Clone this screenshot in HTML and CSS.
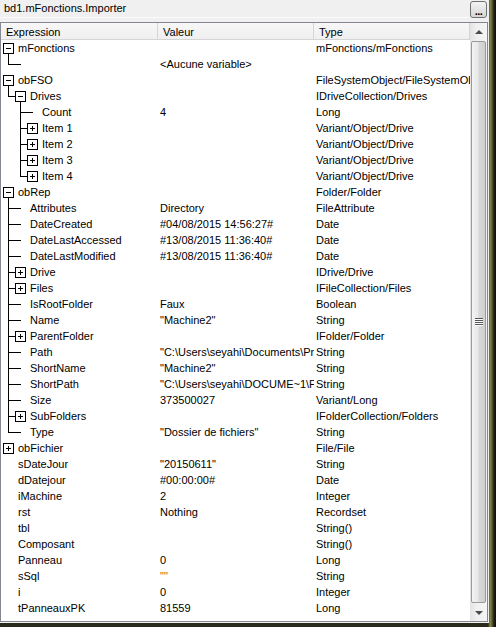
FILE: index.html
```html
<!DOCTYPE html>
<html lang="fr">
<head>
<meta charset="utf-8">
<title>Espions</title>
<link rel="stylesheet" href="styles.css">
</head>
<body>
<div class="window">
  <div class="topbar">
    <div class="field">bd1.mFonctions.Importer</div>
    <div class="btn">...</div>
  </div>
  <div class="listbox">
    <div class="main">
      <div class="hdr">
        <div class="h h1">Expression</div>
        <div class="h h2">Valeur</div>
        <div class="h h3">Type</div>
      </div>
      <div class="rows">
        <div class="r"><div class="c1"><span class="n nm"><i class="bx"></i></span><span>mFonctions</span></div><div class="c2"></div><div class="c3">mFonctions/mFonctions</div></div>
        <div class="r"><div class="c1"><span class="g gl"></span><span class="n nl"></span><span></span></div><div class="c2">&lt;Aucune variable&gt;</div><div class="c3"></div></div>
        <div class="r"><div class="c1"><span class="n nm"><i class="bx"></i></span><span>obFSO</span></div><div class="c2"></div><div class="c3">FileSystemObject/FileSystemObject</div></div>
        <div class="r"><div class="c1"><span class="g gl"></span><span class="n nm"><i class="bx"></i></span><span>Drives</span></div><div class="c2"></div><div class="c3">IDriveCollection/Drives</div></div>
        <div class="r"><div class="c1"><span class="g"></span><span class="g gt"></span><span class="n nl"></span><span>Count</span></div><div class="c2">4</div><div class="c3">Long</div></div>
        <div class="r"><div class="c1"><span class="g"></span><span class="g gt"></span><span class="n np"><i class="bx"></i></span><span>Item 1</span></div><div class="c2"></div><div class="c3">Variant/Object/Drive</div></div>
        <div class="r"><div class="c1"><span class="g"></span><span class="g gt"></span><span class="n np"><i class="bx"></i></span><span>Item 2</span></div><div class="c2"></div><div class="c3">Variant/Object/Drive</div></div>
        <div class="r"><div class="c1"><span class="g"></span><span class="g gt"></span><span class="n np"><i class="bx"></i></span><span>Item 3</span></div><div class="c2"></div><div class="c3">Variant/Object/Drive</div></div>
        <div class="r"><div class="c1"><span class="g"></span><span class="g gl"></span><span class="n np"><i class="bx"></i></span><span>Item 4</span></div><div class="c2"></div><div class="c3">Variant/Object/Drive</div></div>
        <div class="r"><div class="c1"><span class="n nm"><i class="bx"></i></span><span>obRep</span></div><div class="c2"></div><div class="c3">Folder/Folder</div></div>
        <div class="r"><div class="c1"><span class="g gt"></span><span class="n nl"></span><span>Attributes</span></div><div class="c2">Directory</div><div class="c3">FileAttribute</div></div>
        <div class="r"><div class="c1"><span class="g gt"></span><span class="n nl"></span><span>DateCreated</span></div><div class="c2">#04/08/2015 14:56:27#</div><div class="c3">Date</div></div>
        <div class="r"><div class="c1"><span class="g gt"></span><span class="n nl"></span><span>DateLastAccessed</span></div><div class="c2">#13/08/2015 11:36:40#</div><div class="c3">Date</div></div>
        <div class="r"><div class="c1"><span class="g gt"></span><span class="n nl"></span><span>DateLastModified</span></div><div class="c2">#13/08/2015 11:36:40#</div><div class="c3">Date</div></div>
        <div class="r"><div class="c1"><span class="g gt"></span><span class="n np"><i class="bx"></i></span><span>Drive</span></div><div class="c2"></div><div class="c3">IDrive/Drive</div></div>
        <div class="r"><div class="c1"><span class="g gt"></span><span class="n np"><i class="bx"></i></span><span>Files</span></div><div class="c2"></div><div class="c3">IFileCollection/Files</div></div>
        <div class="r"><div class="c1"><span class="g gt"></span><span class="n nl"></span><span>IsRootFolder</span></div><div class="c2">Faux</div><div class="c3">Boolean</div></div>
        <div class="r"><div class="c1"><span class="g gt"></span><span class="n nl"></span><span>Name</span></div><div class="c2">"Machine2"</div><div class="c3">String</div></div>
        <div class="r"><div class="c1"><span class="g gt"></span><span class="n np"><i class="bx"></i></span><span>ParentFolder</span></div><div class="c2"></div><div class="c3">IFolder/Folder</div></div>
        <div class="r"><div class="c1"><span class="g gt"></span><span class="n nl"></span><span>Path</span></div><div class="c2">"C:\Users\seyahi\Documents\Projets"</div><div class="c3">String</div></div>
        <div class="r"><div class="c1"><span class="g gt"></span><span class="n nl"></span><span>ShortName</span></div><div class="c2">"Machine2"</div><div class="c3">String</div></div>
        <div class="r"><div class="c1"><span class="g gt"></span><span class="n nl"></span><span>ShortPath</span></div><div class="c2">"C:\Users\seyahi\DOCUME~1\PROJET~1"</div><div class="c3">String</div></div>
        <div class="r"><div class="c1"><span class="g gt"></span><span class="n nl"></span><span>Size</span></div><div class="c2">373500027</div><div class="c3">Variant/Long</div></div>
        <div class="r"><div class="c1"><span class="g gt"></span><span class="n np"><i class="bx"></i></span><span>SubFolders</span></div><div class="c2"></div><div class="c3">IFolderCollection/Folders</div></div>
        <div class="r"><div class="c1"><span class="g gl"></span><span class="n nl"></span><span>Type</span></div><div class="c2">"Dossier de fichiers"</div><div class="c3">String</div></div>
        <div class="r"><div class="c1"><span class="n np"><i class="bx"></i></span><span>obFichier</span></div><div class="c2"></div><div class="c3">File/File</div></div>
        <div class="r"><div class="c1"><span class="n"></span><span>sDateJour</span></div><div class="c2">"20150611"</div><div class="c3">String</div></div>
        <div class="r"><div class="c1"><span class="n"></span><span>dDatejour</span></div><div class="c2">#00:00:00#</div><div class="c3">Date</div></div>
        <div class="r"><div class="c1"><span class="n"></span><span>iMachine</span></div><div class="c2">2</div><div class="c3">Integer</div></div>
        <div class="r"><div class="c1"><span class="n"></span><span>rst</span></div><div class="c2">Nothing</div><div class="c3">Recordset</div></div>
        <div class="r"><div class="c1"><span class="n"></span><span>tbl</span></div><div class="c2"></div><div class="c3">String()</div></div>
        <div class="r"><div class="c1"><span class="n"></span><span>Composant</span></div><div class="c2"></div><div class="c3">String()</div></div>
        <div class="r"><div class="c1"><span class="n"></span><span>Panneau</span></div><div class="c2">0</div><div class="c3">Long</div></div>
        <div class="r"><div class="c1"><span class="n"></span><span>sSql</span></div><div class="c2"><span class="str">""</span></div><div class="c3">String</div></div>
        <div class="r"><div class="c1"><span class="n"></span><span>i</span></div><div class="c2">0</div><div class="c3">Integer</div></div>
        <div class="r"><div class="c1"><span class="n"></span><span>tPanneauxPK</span></div><div class="c2">81559</div><div class="c3">Long</div></div>
      </div>
    </div>
    <div class="sb">
      <div class="arr"><span class="up"></span></div>
      <div class="track"><div class="thumb"><span class="grip"></span></div></div>
      <div class="arr"><span class="dn"></span></div>
    </div>
  </div>
</div>
</body>
</html>
```

FILE: styles.css
```css
html, body {
  margin: 0;
  padding: 0;
}
body {
  width: 496px;
  height: 627px;
  overflow: hidden;
  font-family: "Liberation Sans", Arial, sans-serif;
  font-size: 11px;
  color: #000;
  background:
    linear-gradient(to right, #2a2b1c 0, #2a2b1c 488px, #55542f 489px, #8d8b55 490px, #5c5b34 492px, #1d1e15 494px, #0f0f0c 496px);
}
.window {
  width: 489px;
  height: 623px;
  background: #f0f0f0;
  display: flex;
  flex-direction: column;
}
.topbar {
  display: flex;
  height: 18px;
  gap: 2px;
}
.field {
  flex: 1;
  height: 17px;
  line-height: 17px;
  padding-left: 4px;
  background: #f0f0f0;
  border-bottom: 1px solid #fbfbfb;
  white-space: nowrap;
}
.btn {
  width: 17px;
  height: 17px;
  margin-top: 1px;
  margin-right: 2px;
  box-sizing: border-box;
  border: 1px solid #707070;
  border-radius: 3px;
  background: linear-gradient(#f3f3f3, #e4e4e4 50%, #d6d6d6);
  font-weight: bold;
  font-size: 11px;
  line-height: 18px;
  text-align: center;
  letter-spacing: -0.5px;
  overflow: hidden;
}
.listbox {
  margin-top: 4px;
  width: 488px;
  height: 600px;
  box-sizing: border-box;
  border: 1px solid #828790;
  background: #fff;
  display: flex;
}
.main {
  width: 469px;
  display: flex;
  flex-direction: column;
}
.hdr {
  display: flex;
  height: 16px;
  border-bottom: 1px solid #d5d5d5;
  background: linear-gradient(#f7f7f7, #efefef);
}
.h {
  box-sizing: border-box;
  border-right: 1px solid #d5d5d5;
  padding: 3px 0 0 5px;
  line-height: 13px;
  white-space: nowrap;
  overflow: hidden;
}
.h1 { width: 157px; }
.h2 { width: 156px; }
.h3 { width: 156px; }
.rows {
  display: flex;
  flex-direction: column;
}
.r {
  display: flex;
  height: 16px;
  line-height: 16px;
}
.c1 {
  width: 157px;
  box-sizing: border-box;
  padding-left: 2px;
  display: flex;
  overflow: hidden;
  white-space: nowrap;
}
.c2, .c3 {
  width: 156px;
  box-sizing: border-box;
  padding-left: 2px;
  overflow: hidden;
  white-space: nowrap;
}
.str { color: #c8600c; }

/* tree guides */
.g {
  flex: none;
  width: 12px;
  height: 16px;
}
.gt {
  background:
    linear-gradient(#000, #000) 5px 0 / 1px 16px no-repeat,
    linear-gradient(#000, #000) 5px 8px / 7px 1px no-repeat;
}
.gl {
  background:
    linear-gradient(#000, #000) 5px 0 / 1px 9px no-repeat,
    linear-gradient(#000, #000) 5px 8px / 7px 1px no-repeat;
}
.n {
  flex: none;
  width: 11px;
  height: 16px;
  margin-right: 4px;
}
.nl {
  background: linear-gradient(#000, #000) 0 8px / 6px 1px no-repeat;
}
.nm {
  background: linear-gradient(#000, #000) 5px 14px / 1px 2px no-repeat;
}
.bx {
  display: block;
  width: 11px;
  height: 11px;
  margin-top: 3px;
  box-sizing: border-box;
  border: 1px solid #000;
  background: #fff;
}
.nm .bx {
  background: linear-gradient(#000, #000) 2px 4px / 5px 1px no-repeat, #fff;
}
.np .bx {
  background:
    linear-gradient(#000, #000) 2px 4px / 5px 1px no-repeat,
    linear-gradient(#000, #000) 4px 2px / 1px 5px no-repeat,
    #fff;
}

/* scrollbar */
.sb {
  width: 17px;
  display: flex;
  flex-direction: column;
  background: linear-gradient(to right, #e3e3e3, #f0f0f0 40%, #f4f4f4);
}
.arr {
  height: 17px;
  display: flex;
  align-items: center;
  justify-content: center;
}
.up {
  width: 0;
  height: 0;
  border-left: 4px solid transparent;
  border-right: 4px solid transparent;
  border-bottom: 4px solid #4a4a4a;
}
.dn {
  width: 0;
  height: 0;
  border-left: 4px solid transparent;
  border-right: 4px solid transparent;
  border-top: 4px solid #4a4a4a;
}
.track {
  height: 564px;
  padding-top: 1px;
  box-sizing: border-box;
}
.thumb {
  height: 562px;
  margin: 0 1px;
  box-sizing: border-box;
  border: 1px solid #9a9a9a;
  border-radius: 2px;
  background: linear-gradient(to right, #f4f4f4, #e8e8e8 45%, #d8d8d8 55%, #cfcfcf);
  display: flex;
  align-items: center;
  justify-content: center;
}
.grip {
  width: 8px;
  height: 8px;
  background: repeating-linear-gradient(#555 0 1px, #fdfdfd 1px 2px);
}
```
